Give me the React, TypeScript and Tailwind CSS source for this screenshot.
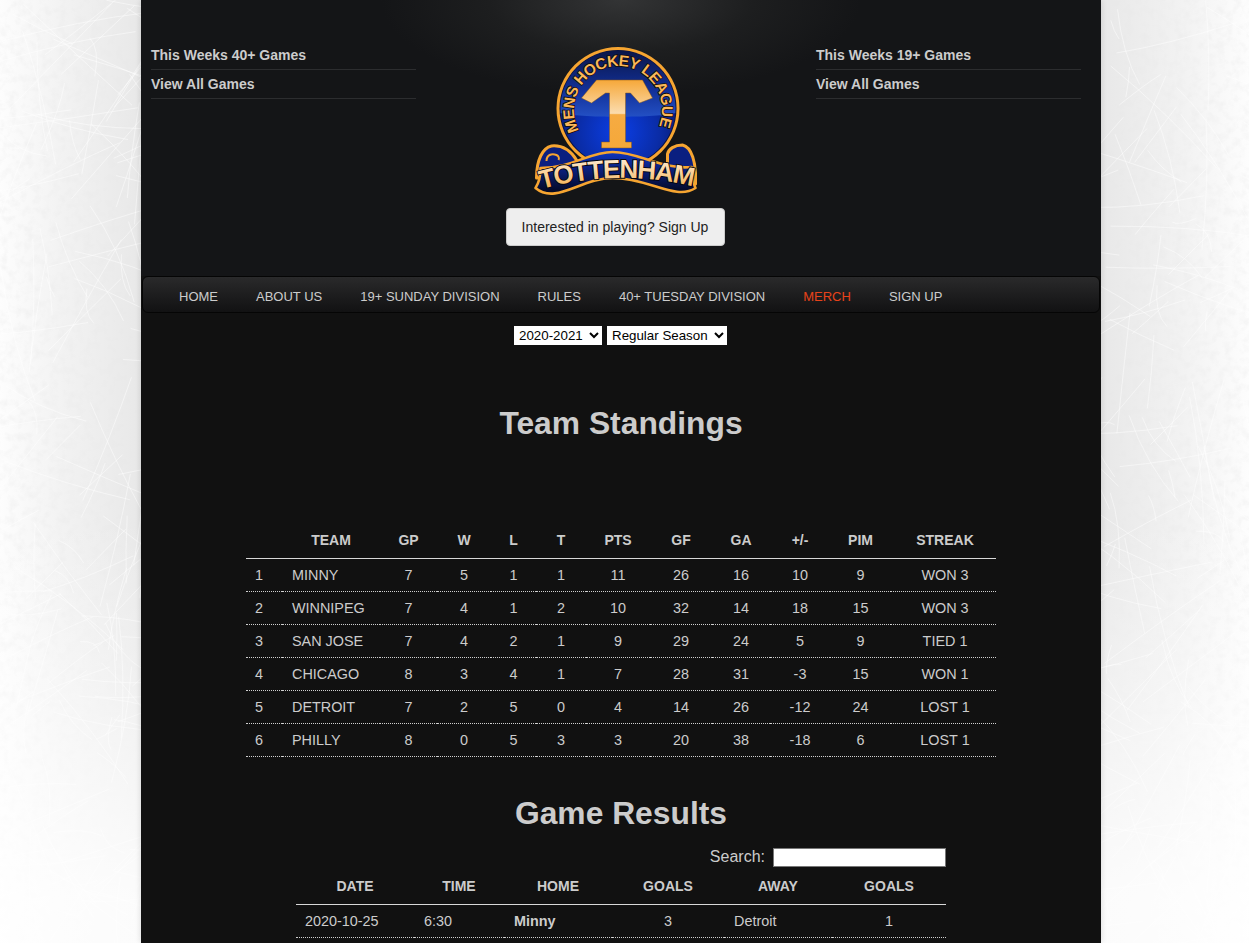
const navItems = ["HOME", "ABOUT US", "19+ SUNDAY DIVISION", "RULES", "40+ TUESDAY DIVISION", "MERCH", "SIGN UP"];

const standings = [
  ["1", "MINNY", "7", "5", "1", "1", "11", "26", "16", "10", "9", "WON 3"],
  ["2", "WINNIPEG", "7", "4", "1", "2", "10", "32", "14", "18", "15", "WON 3"],
  ["3", "SAN JOSE", "7", "4", "2", "1", "9", "29", "24", "5", "9", "TIED 1"],
  ["4", "CHICAGO", "8", "3", "4", "1", "7", "28", "31", "-3", "15", "WON 1"],
  ["5", "DETROIT", "7", "2", "5", "0", "4", "14", "26", "-12", "24", "LOST 1"],
  ["6", "PHILLY", "8", "0", "5", "3", "3", "20", "38", "-18", "6", "LOST 1"],
];

const standingsHead = ["", "TEAM", "GP", "W", "L", "T", "PTS", "GF", "GA", "+/-", "PIM", "STREAK"];
const standingsCols = ["w-[36px]", "w-[98px]", "w-[57px]", "w-[54px]", "w-[45px]", "w-[50px]", "w-[64px]", "w-[62px]", "w-[58px]", "w-[60px]", "w-[61px]", "w-[105px]"];

function cellClass(i: number) {
  if (i === 0) return "pl-[9px] pt-[2px] text-left";
  if (i === 1) return "pl-[10px] pt-[2px] text-left";
  if (i === 11) return "pl-[3px] pt-[2px] text-center";
  return "pt-[2px] text-center";
}

// scratches on the ice, seeded so the picture stays the same
function scratches(count: number) {
  let seed = 17;
  const rnd = () => {
    seed = (seed * 16807) % 2147483647;
    return seed / 2147483647;
  };
  const lines: string[] = [];
  for (let i = 0; i < count; i++) {
    const x = rnd() * 1249;
    const y = rnd() * 943;
    const angle = rnd() * Math.PI;
    const len = 20 + rnd() * 130;
    const bend = (rnd() - 0.5) * 16;
    const dx = Math.cos(angle) * len;
    const dy = Math.sin(angle) * len;
    lines.push(`M${x} ${y}q${dx / 2 + bend} ${dy / 2 - bend} ${dx} ${dy}`);
  }
  return lines;
}

function IceBackground() {
  return (
    <svg className="absolute inset-0 h-[943px] w-[1249px]" viewBox="0 0 1249 943">
      <defs>
        <linearGradient id="iceLeft" x1="0" x2="1" y1="0" y2="0">
          <stop offset="0" stopColor="#fdfdfd" />
          <stop offset="0.45" stopColor="#f2f2f2" />
          <stop offset="1" stopColor="#e8e8e8" />
        </linearGradient>
        <linearGradient id="iceRight" x1="0" x2="1" y1="0" y2="0">
          <stop offset="0" stopColor="#e8e8e8" />
          <stop offset="0.55" stopColor="#f2f2f2" />
          <stop offset="1" stopColor="#fdfdfd" />
        </linearGradient>
        <linearGradient id="iceFade" x1="0" x2="0" y1="0" y2="1">
          <stop offset="0.55" stopColor="#ffffff" stopOpacity="0" />
          <stop offset="0.95" stopColor="#ffffff" stopOpacity="0.85" />
        </linearGradient>
        <filter id="iceNoise" x="0" y="0" width="100%" height="100%">
          <feTurbulence type="fractalNoise" baseFrequency="0.12" numOctaves="4" seed="4" />
          <feColorMatrix values="0 0 0 0 0.8 0 0 0 0 0.8 0 0 0 0 0.8 0 0 0 0.8 -0.34" />
        </filter>
      </defs>
      <rect x="0" y="0" width="141" height="943" fill="url(#iceLeft)" />
      <rect x="1101" y="0" width="148" height="943" fill="url(#iceRight)" />
      <rect x="0" y="0" width="1249" height="943" filter="url(#iceNoise)" />
      <path d={scratches(1100).join("")} fill="none" stroke="#ffffff" strokeWidth="0.6" strokeOpacity="0.8" />
      <rect x="0" y="0" width="1249" height="943" fill="url(#iceFade)" />
    </svg>
  );
}

function Logo() {
  return (
    <svg width="164" height="154" viewBox="533.5 44 164 154" className="block">
      <defs>
        <radialGradient id="ball" cx="0.5" cy="0.7" r="0.6">
          <stop offset="0" stopColor="#0b3ee6" />
          <stop offset="0.6" stopColor="#0a2ca6" />
          <stop offset="1" stopColor="#061766" />
        </radialGradient>
        <linearGradient id="ballTop" x1="0" x2="0" y1="0" y2="1">
          <stop offset="0" stopColor="#0a1648" />
          <stop offset="0.6" stopColor="#123098" />
          <stop offset="1" stopColor="#2350c4" />
        </linearGradient>
        <linearGradient id="tee" x1="0" x2="0" y1="0" y2="1">
          <stop offset="0" stopColor="#f6a83a" />
          <stop offset="0.49" stopColor="#fbdcae" />
          <stop offset="0.51" stopColor="#f6ab42" />
          <stop offset="1" stopColor="#f5a83a" />
        </linearGradient>
        <linearGradient id="band" x1="0" x2="0" y1="0" y2="1">
          <stop offset="0" stopColor="#0d35c0" />
          <stop offset="0.5" stopColor="#0a1c70" />
          <stop offset="1" stopColor="#03071c" />
        </linearGradient>
        <linearGradient id="word" x1="0" x2="0" y1="0" y2="1">
          <stop offset="0" stopColor="#fff3e2" />
          <stop offset="0.5" stopColor="#f9cf94" />
          <stop offset="1" stopColor="#f39f2c" />
        </linearGradient>
        <path id="ringText" d="M579.5 130.5A44 44 0 1 1 657.5 130.5" />
        <path id="bannerText" d="M542 189Q618 168 696 187" />
      </defs>
      {/* roundel */}
      <circle cx="618.5" cy="108.5" r="61.5" fill="#f6a531" />
      <circle cx="618.5" cy="108.5" r="58.5" fill="#0a1240" />
      <circle cx="618.5" cy="108.5" r="57.5" fill="url(#ball)" />
      <path d="M561.2 113A57.5 57.5 0 1 1 675.8 113C660 118 577 118 561.2 113Z" fill="url(#ballTop)" />
      <text fill="#f9b759" stroke="#140d06" strokeWidth="1.6" paintOrder="stroke" fontFamily="Liberation Sans, sans-serif" fontWeight="700" fontSize="15.5" letterSpacing="-0.5">
        <textPath href="#ringText" startOffset="0">MENS HOCKEY LEAGUE</textPath>
      </text>
      {/* the T */}
      <path d="M597 80H643L653 98L640 103L631 93H626V142H632V148H602V142H610V93H606L592 103L582 98Z" fill="url(#tee)" stroke="#8a5a18" strokeWidth="0.5" />
      {/* scroll ends behind the banner */}
      <path d="M537 178C537 160 543 148 552 146C562 145 570 149 577 160L572 178Z" fill="#0a1f80" stroke="#f6a531" strokeWidth="3" strokeLinejoin="round" />
      <path d="M547 161C547 155 552 153 557 155C559 156 560 158 559 160" fill="none" stroke="#f6a531" strokeWidth="2" />
      <path d="M696 184C697 162 692 147 683 145C675 145 669 149 668 154L668 176Z" fill="#0a1f80" stroke="#f6a531" strokeWidth="3" strokeLinejoin="round" />
      {/* banner */}
      <path d="M536 188C540 182 541 176 541 168C572 168 590 152 613 152C640 152 662 170 692 167C693 174 693 182 696 188C676 201 650 178 613 178C582 178 556 205 536 188Z" fill="url(#band)" stroke="#f6a531" strokeWidth="2.6" strokeLinejoin="round" />
      <text fill="url(#word)" stroke="#05050e" strokeWidth="1.8" paintOrder="stroke" fontFamily="Liberation Sans, sans-serif" fontWeight="700" fontSize="26" letterSpacing="-1.2">
        <textPath href="#bannerText" startOffset="0">TOTTENHAM</textPath>
      </text>
    </svg>
  );
}

function SideLinks({ title }: { title: string }) {
  return (
    <ul className="w-[265px] pt-[41px] text-[14px] font-bold leading-[28px] text-[#cccccc]">
      <li className="border-b border-[#2c2d2f]">{title}</li>
      <li className="border-b border-[#2c2d2f]">View All Games</li>
    </ul>
  );
}

function StandingsTable() {
  return (
    <table className="w-[750px] table-fixed border-collapse text-[14.4px] text-[#cccccc]">
      <colgroup>
        {standingsCols.map((c, i) => (
          <col key={i} className={c} />
        ))}
      </colgroup>
      <thead>
        <tr className="h-[35px] border-b border-[#d8d8d8]">
          {standingsHead.map((h, i) => (
            <th key={i} className={i === 11 ? "pl-[3px] text-center text-[14px] font-bold" : "text-center text-[14px] font-bold"}>{h}</th>
          ))}
        </tr>
      </thead>
      <tbody>
        {standings.map((row) => (
          <tr key={row[0]} className="h-[33px] border-b border-dotted border-[#d0d0d0]">
            {row.map((cell, i) => (
              <td key={i} className={cellClass(i)}>{cell}</td>
            ))}
          </tr>
        ))}
      </tbody>
    </table>
  );
}

function ResultsTable() {
  return (
    <table className="mt-[3px] w-[650px] table-fixed border-collapse text-[14.4px] text-[#cccccc]">
      <colgroup>
        <col className="w-[118px]" />
        <col className="w-[90px]" />
        <col className="w-[108px]" />
        <col className="w-[112px]" />
        <col className="w-[108px]" />
        <col className="w-[114px]" />
      </colgroup>
      <thead>
        <tr className="h-[35px] border-b border-[#d8d8d8] text-[14px]">
          <th className="font-bold">DATE</th>
          <th className="font-bold">TIME</th>
          <th className="font-bold">HOME</th>
          <th className="font-bold">GOALS</th>
          <th className="font-bold">AWAY</th>
          <th className="font-bold">GOALS</th>
        </tr>
      </thead>
      <tbody>
        <tr className="h-[33px] border-b border-dotted border-[#d0d0d0]">
          <td className="pl-[9px] pt-[2px]">2020-10-25</td>
          <td className="pl-[10px] pt-[2px]">6:30</td>
          <td className="pl-[10px] pt-[2px] font-bold">Minny</td>
          <td className="pt-[2px] text-center">3</td>
          <td className="pl-[10px] pt-[2px]">Detroit</td>
          <td className="pt-[2px] text-center">1</td>
        </tr>
      </tbody>
    </table>
  );
}

export default function App() {
  return (
    <div className="relative h-[943px] w-[1249px] overflow-hidden bg-white font-['Liberation_Sans',Arial,sans-serif]">
      <IceBackground />
      <div className="relative ml-[141px] h-[943px] w-[960px] bg-[#111111] shadow-[0_0_6px_rgba(0,0,0,0.15)]">
        <header className="flex h-[276px] justify-between bg-[radial-gradient(ellipse_240px_95px_at_50%_0,#333435_0%,#1d1e1f_55%,#141517_100%)] pl-[10px] pr-[20px]">
          <SideLinks title="This Weeks 40+ Games" />
          <div className="mr-[2px] flex flex-col items-center pt-[44px]">
            <Logo />
            <button className="mt-[10px] h-[38px] w-[219px] rounded-[4px] border border-[#cccccc] bg-[#eeeeee] text-[14px] text-[#222222]">
              Interested in playing? Sign Up
            </button>
          </div>
          <SideLinks title="This Weeks 19+ Games" />
        </header>

        <nav className="mx-[1px] flex h-[37px] items-center gap-[38px] rounded-[6px] border border-[#050505] bg-gradient-to-b from-[#2a2a2b] to-[#121213] pl-[36px] pt-[4px] text-[13px] text-[#cccccc]">
          {navItems.map((item) => (
            <a key={item} className={item === "MERCH" ? "text-[#e8431a]" : ""}>{item}</a>
          ))}
        </nav>

        <div className="flex justify-center gap-[5px] pr-[1px] pt-[13px]">
          <select className="h-[19px] w-[88px] bg-white pl-[1px] text-[13.33px] text-black">
            <option>2020-2021</option>
          </select>
          <select className="h-[19px] w-[120px] bg-white pl-[1px] text-[13.33px] text-black">
            <option>Regular Season</option>
          </select>
        </div>

        <h1 className="pt-[60px] text-center text-[31.8px] font-bold leading-[37px] text-[#cccccc]">Team Standings</h1>

        <div className="flex justify-center pt-[81px]">
          <StandingsTable />
        </div>

        <h2 className="pt-[38px] text-center text-[31.8px] font-bold leading-[37px] text-[#cccccc]">Game Results</h2>

        <div className="mx-auto w-[650px]">
          <div className="flex items-center justify-end gap-[8px] pt-[16px] text-[16px] leading-[18px] text-[#cccccc]">
            <span>Search:</span>
            <input className="h-[19px] w-[173px] border border-[#777777] bg-white" />
          </div>
          <ResultsTable />
        </div>
      </div>
    </div>
  );
}
